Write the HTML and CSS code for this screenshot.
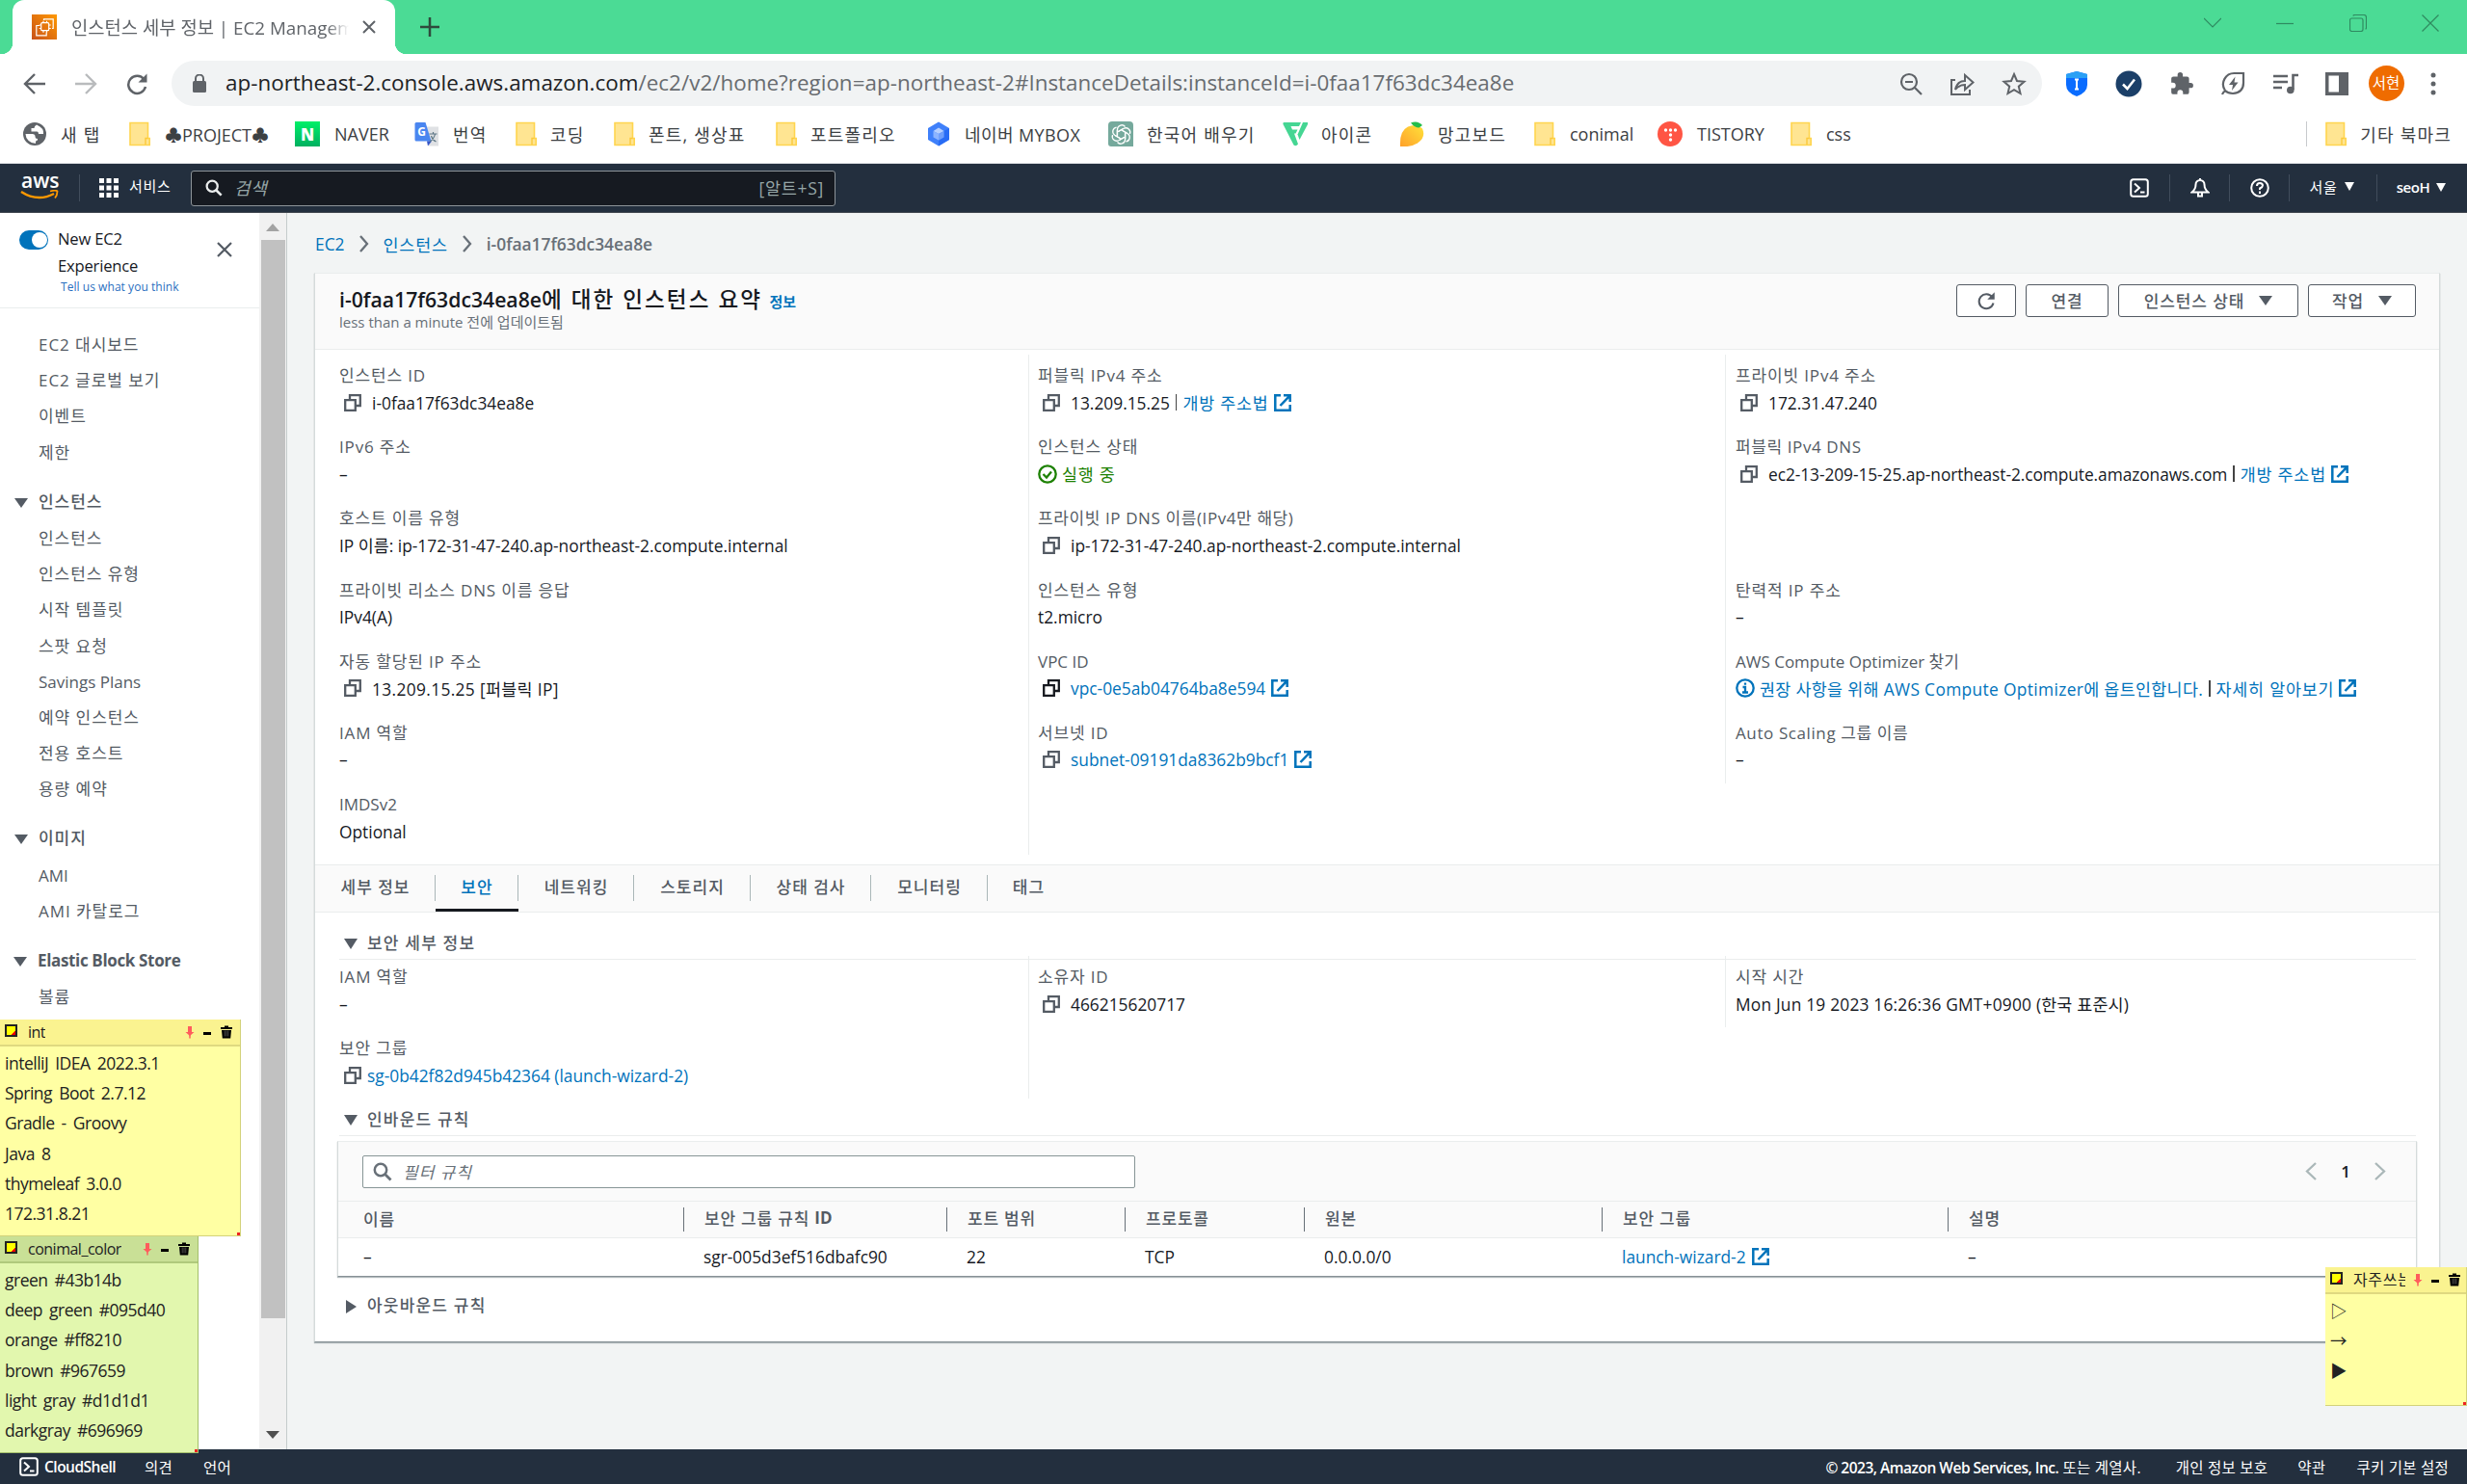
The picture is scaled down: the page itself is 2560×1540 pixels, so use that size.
FILE: index.html
```html
<!DOCTYPE html>
<html lang="ko">
<head>
    <meta charset="UTF-8">
    <meta name="viewport" content="width=device-width, initial-scale=1.0">
    <title>인스턴스 세부 정보 | EC2 Management Console</title>
    <link rel="stylesheet" href="styles.css">
</head>
<body>
    <!-- shared icons -->
    <svg class="sprite" width="0" height="0">
        <linearGradient id="orange" x1="0" y1="1" x2="1" y2="0"><stop offset="0" stop-color="#c8511b"/><stop offset="1" stop-color="#f90"/></linearGradient>
        <linearGradient id="green" x1="0" y1="0" x2="0" y2="1"><stop offset="0" stop-color="#00f068"/><stop offset="1" stop-color="#00b060"/></linearGradient>
        <linearGradient id="mango" x1="0" y1="1" x2="1" y2="0"><stop offset="0" stop-color="#ffa02a"/><stop offset="1" stop-color="#ffe23a"/></linearGradient>
        <symbol id="copy" viewBox="0 0 18 18"><path d="M1.2 6.2h10.6v10.6H1.2zM6 6V1.2h10.8V12H12" fill="none" stroke="currentColor" stroke-width="2.3"/></symbol>
        <symbol id="ext" viewBox="0 0 18 18"><path d="M7 1.3H1.3v15.4h15.4V11M10 1.3h6.7V8M16.2 1.8L6.5 12" fill="none" stroke="currentColor" stroke-width="2.5"/></symbol>
        <symbol id="search" viewBox="0 0 20 20"><circle cx="8" cy="8" r="6.2" fill="none" stroke="currentColor" stroke-width="2.5"/><path d="M12.5 12.5l6 6" stroke="currentColor" stroke-width="2.8"/></symbol>
        <symbol id="folder" viewBox="0 0 22 26"><path d="M1 1.5h18.500v16H21.200v7H1z" fill="#ffe592" stroke="#ffd54f" stroke-width="1.6"/><path d="M17 24v-6.500h2.500" fill="none" stroke="#fbc93c" stroke-width="1.4"/></symbol>
        <symbol id="shell" viewBox="0 0 20 20"><rect x="1.2" y="1.2" width="17.6" height="17.6" rx="2.5" fill="none" stroke="currentColor" stroke-width="2"/><path d="M5 5.500l5 4.500-5 4.500M11 14.500h4.500" fill="none" stroke="currentColor" stroke-width="2"/></symbol>
        <symbol id="reload" viewBox="0 0 24 24"><path d="M19.500 7.500A9 9 0 1 0 21 15" fill="none" stroke="currentColor" stroke-width="2.5"/><path d="M22.500 1.500v9h-9z" fill="currentColor"/></symbol>
        <symbol id="pin" viewBox="0 0 10 14"><path d="M3 1h4v6h2.500L5 11 .5 7H3z" fill="#ff5c5c"/><path d="M5 10v3.500" stroke="#ff5c5c" stroke-width="1.5"/></symbol>
        <symbol id="trash" viewBox="0 0 12 14"><path d="M0 2h4V.5h4V2h4v2H0zM1 5h10l-.8 8.500H1.800z" fill="#000"/><path d="M4.200 5.500v6M6 5.500v6M7.800 5.500v6" stroke="#999" stroke-width=".5"/></symbol>
    </svg>

    <!-- browser chrome -->
    <div class="tabstrip">
        <div class="tab">
            <svg width="26" height="26" viewBox="0 0 26 26"><rect width="26" height="26" fill="url(#orange)"/><g fill="none" stroke="#fff" stroke-width="1.2"><path d="M12.500 6V4.800h9.700v9.700H21M8 11.500H4.800v10.300h10.400V18.500"/><rect x="9.700" y="8.700" width="8" height="8" rx="1"/><path d="M12 6.700v2m3.500-2v2m-3.500 8v2m3.500-2v2M7.700 11h2m-2 3.500h2m8-3.500h2m-2 3.500h2"/></g></svg>
            <span class="tab-title">인스턴스 세부 정보 | EC2 Management</span>
            <svg width="14" height="14" viewBox="0 0 14 14"><path d="M1 1l12 12M13 1L1 13" stroke="#5f6368" stroke-width="2"/></svg>
        </div>
        <svg class="newtab" width="20" height="20" viewBox="0 0 20 20"><path d="M10 0v20M0 10h20" stroke="#2f4a3d" stroke-width="2.5"/></svg>
        <div class="winctl">
            <svg width="18" height="18" viewBox="0 0 18 18"><path d="M0 4l9 9 9-9"/></svg>
            <svg width="18" height="18" viewBox="0 0 18 18"><path d="M0 9.500h18"/></svg>
            <svg width="18" height="18" viewBox="0 0 18 18"><rect x=".5" y="4" width="13.5" height="13.5" rx="2"/><path d="M4 1.500Q4 .5 5.500.5H15q2.500 0 2.500 2.500v10.500q0 1.500-1 1.500"/></svg>
            <svg width="18" height="18" viewBox="0 0 18 18"><path d="M.5.5l17 17M17.500.5l-17 17"/></svg>
        </div>
    </div>

    <div class="toolbar">
        <div class="nav">
            <svg width="24" height="24" viewBox="0 0 24 24" fill="none" stroke="#5f6368" stroke-width="2.4"><path d="M23 12H3M12 2L2 12l10 10"/></svg>
            <svg width="24" height="24" viewBox="0 0 24 24" fill="none" stroke="#b9bbbd" stroke-width="2.4"><path d="M1 12h20M12 2l10 10-10 10"/></svg>
            <svg class="grey" width="24" height="24"><use href="#reload"/></svg>
        </div>
        <div class="urlbar">
            <svg width="14" height="20" viewBox="0 0 14 20"><rect y="7" width="14" height="12" rx="1.5" fill="#5f6368"/><path d="M3 8V4.500a4 4 0 0 1 8 0V8" fill="none" stroke="#5f6368" stroke-width="2"/></svg>
            <span class="url"><b>ap-northeast-2.console.aws.amazon.com</b>/ec2/v2/home?region=ap-northeast-2#InstanceDetails:instanceId=i-0faa17f63dc34ea8e</span>
            <div class="url-icons">
                <svg width="24" height="24" viewBox="0 0 24 24" fill="none" stroke="#5f6368" stroke-width="2.2"><circle cx="10" cy="10" r="8"/><path d="M16 16l7 7M6 10h8"/></svg>
                <svg width="26" height="24" viewBox="0 0 26 24" fill="none" stroke="#5f6368" stroke-width="2"><path d="M6 8H2v15h19v-5"/><path d="M6 18q2-9 10-9V3l8.500 7.500L16 18v-5q-6 0-10 5z"/></svg>
                <svg width="26" height="26" viewBox="0 0 26 26" fill="none" stroke="#5f6368" stroke-width="2"><path d="M13 3l3 7 7.500.700-5.700 5 1.700 7.300-6.500-3.900L6.500 23l1.700-7.300-5.700-5L10 10z"/></svg>
            </div>
        </div>
        <div class="exts">
            <svg width="26" height="28" viewBox="0 0 26 28"><path d="M13 1l11 3v11q0 8-11 12Q2 23 2 15V4z" fill="#0a6cff"/><path d="M13 1l11 3v4H2V4z" fill="#2aa0f5"/><path d="M13 9v11M11 9.500h4M11 19.500h4" stroke="#fff" stroke-width="2"/></svg>
            <svg width="28" height="28" viewBox="0 0 28 28"><circle cx="14" cy="14" r="13.5" fill="#1b3f68"/><path d="M8 14.500l4.500 4.500L20 9.500" fill="none" stroke="#fff" stroke-width="2.5"/></svg>
            <svg width="26" height="26" viewBox="0 0 24 24"><path d="M20.500 11H19V7a2 2 0 0 0-2-2h-4V3.500a2.500 2.500 0 0 0-5 0V5H4a2 2 0 0 0-2 2v3.800h1.500a2.700 2.700 0 0 1 0 5.400H2V20a2 2 0 0 0 2 2h3.800v-1.500a2.700 2.700 0 0 1 5.400 0V22H17a2 2 0 0 0 2-2v-4h1.500a2.500 2.500 0 0 0 0-5z" fill="#5f6368"/></svg>
            <svg width="26" height="26" viewBox="0 0 26 26" fill="none" stroke="#5f6368" stroke-width="2.2"><path d="M24 2h-9A11.500 11.500 0 0 0 5 20q3 3 8 3 11-1 11-11zM2 24q1-3 4-4"/><path d="M15.500 5.500L9 14h4l-1 6 6.500-8.500h-4z" fill="#5f6368" stroke="none"/></svg>
            <svg width="28" height="24" viewBox="0 0 28 24"><path d="M1 4h15M1 10h15M1 16h9" stroke="#5f6368" stroke-width="2.6"/><path d="M21.500 18V3H27" fill="none" stroke="#5f6368" stroke-width="2.6"/><circle cx="18.8" cy="18.5" r="3.8" fill="#5f6368"/></svg>
            <svg width="24" height="24" viewBox="0 0 24 24"><path d="M0 0h24v24H0zM3.500 3.500v17H14v-17z" fill="#5f6368" fill-rule="evenodd"/></svg>
            <span class="avatar">서현</span>
            <svg width="6" height="24" viewBox="0 0 6 24" fill="#5f6368"><circle cx="3" cy="3" r="2.5"/><circle cx="3" cy="12" r="2.5"/><circle cx="3" cy="21" r="2.5"/></svg>
        </div>
    </div>

    <div class="bookmarks">
        <a class="ko"><svg width="26" height="26" viewBox="0 0 26 26"><circle cx="13" cy="13" r="12" fill="#5f6368"/><path d="M3.500 13h7q3 0 3 2.500t2.500 2.500v1.500q-2 0-2 2v1.300A10 10 0 0 1 3.500 13z" fill="#fff"/><path d="M15 3.500q-2.500 1-2.500 3.500H9.500v3.500h6q1.500 0 1.500 2.500h5q1-6-7-9.500z" fill="#fff"/></svg>새 탭</a>
        <a><svg width="22" height="26"><use href="#folder"/></svg>♣PROJECT♣</a>
        <a><svg width="26" height="26" viewBox="0 0 26 26"><rect width="26" height="26" fill="url(#green)"/><text class="glyph" x="13" y="19.5" font-size="17" font-weight="800">N</text></svg>NAVER</a>
        <a class="ko"><svg width="26" height="26" viewBox="0 0 26 26"><path d="M9 5.500h16v20H15z" fill="#dfe1e4"/><path d="M2 1h9.500l6 19.500H2q-1.500 0-1.500-1.500V2.500Q.5 1 2 1z" fill="#4a86f0"/><path d="M13 20.500h5l-4 5z" fill="#3355c8"/><text class="glyph" x="7.5" y="15" font-size="12" font-weight="700">G</text><path d="M15.500 13h8M19.500 11v2M21.500 13q-1 5-5.500 8M17.500 15q1 4 5 6" fill="none" stroke="#5d7684" stroke-width="1.2"/></svg>번역</a>
        <a class="ko"><svg width="22" height="26"><use href="#folder"/></svg>코딩</a>
        <a class="ko"><svg width="22" height="26"><use href="#folder"/></svg>폰트, 생상표</a>
        <a class="ko"><svg width="22" height="26"><use href="#folder"/></svg>포트폴리오</a>
        <a class="mybox"><svg width="26" height="26" viewBox="0 0 26 26"><path d="M13 .5l11 6.500v12L13 25.500 2 19V7z" fill="#3f80fa"/><path d="M13 20v5.500l11-6.500V7l-5.500 3v6.500z" fill="#286cf5"/><path d="M13 6.500l5.500 3.500-5.500 3-5.500-3z" fill="#b5cfff"/><path d="M7.500 10l5.500 3v6.500l-5.500-3z" fill="#8cb4ff"/><path d="M13 13l5.500-3v6.500L13 19.500z" fill="#6f9ffb"/></svg>네이버 MYBOX</a>
        <a class="ko"><svg width="26" height="26" viewBox="0 0 26 26"><path d="M4 0h18q4 0 4 4v22H3q-3 0-3-3V4q0-4 4-4z" fill="#75a99c"/><g fill="none" stroke="#fff" stroke-width="1.3"><path id="petal" d="M9.500 14.500V8a4.500 4.500 0 0 1 8-2.500M9.500 11l6-3.500"/><use href="#petal" transform="rotate(60 13.5 13.5)"/><use href="#petal" transform="rotate(120 13.5 13.5)"/><use href="#petal" transform="rotate(180 13.5 13.5)"/><use href="#petal" transform="rotate(240 13.5 13.5)"/><use href="#petal" transform="rotate(300 13.5 13.5)"/></g></svg>한국어 배우기</a>
        <a class="ko"><svg width="26" height="26" viewBox="0 0 26 26" fill="#45d693"><path d="M1.500 1H19l-2 4H8.500l1.500 3.500h5.500l-2 4H12l4 11q-2 3-4.500 1L.5 3Q0 1 1.500 1z"/><path d="M21 1h5v2l-8.500 16-2-5.500z"/></svg>아이콘</a>
        <a class="ko"><svg width="26" height="26" viewBox="0 0 26 26"><path d="M1 26Q0 10 9 5.500q9-4 15 2 4 9-5 15-7 4.500-18 3.500z" fill="url(#mango)"/><path d="M12 1.500q7-3 12 2.500l-3.500 2.500q-4.500 0-8.500-5z" fill="#24bd4b"/></svg>망고보드</a>
        <a><svg width="22" height="26"><use href="#folder"/></svg>conimal</a>
        <a><svg width="26" height="26" viewBox="0 0 26 26"><circle cx="13" cy="13" r="13" fill="#ff5544"/><g fill="#fff"><circle cx="8.5" cy="9" r="1.7"/><circle cx="13.5" cy="9" r="1.7"/><circle cx="18.5" cy="9" r="1.7"/><circle cx="13.5" cy="14" r="1.7"/><circle cx="13.5" cy="19" r="1.7"/></g></svg>TISTORY</a>
        <a><svg width="22" height="26"><use href="#folder"/></svg>css</a>
        <a class="other ko"><svg width="22" height="26"><use href="#folder"/></svg>기타 북마크</a>
    </div>

    <!-- aws header -->
    <div class="awsbar">
        <div class="logo">
            <span>aws</span>
            <svg width="40" height="12" viewBox="0 0 40 12"><path d="M1 2q17 11 34 2" fill="none" stroke="#f90" stroke-width="2.5"/><path d="M31 1.500q6-1.500 7.500 0 0 4-2.500 7" fill="none" stroke="#f90" stroke-width="1.8"/></svg>
        </div>
        <div class="services">
            <svg width="20" height="20" viewBox="0 0 20 20" fill="#fff"><path d="M0 0h5v5H0zM7.500 0h5v5h-5zM15 0h5v5h-5zM0 7.500h5v5H0zM7.500 7.500h5v5h-5zM15 7.500h5v5h-5zM0 15h5v5H0zM7.500 15h5v5h-5zM15 15h5v5h-5z"/></svg>
            <span>서비스</span>
        </div>
        <div class="awssearch">
            <svg width="18" height="18"><use href="#search"/></svg>
            <i>검색</i>
            <span>[알트+S]</span>
        </div>
        <div class="awsright">
            <div><svg width="20" height="20"><use href="#shell"/></svg></div>
            <div><svg width="20" height="20" viewBox="0 0 20 20" fill="none" stroke="#fff" stroke-width="2"><path d="M1.500 14.500q4-3 4-8a4.500 4.500 0 0 1 9 0q0 5 4 8z"/><path d="M8 15v3.500h4V15M10 0v2"/></svg></div>
            <div><svg width="20" height="20" viewBox="0 0 20 20" fill="none" stroke="#fff" stroke-width="2"><circle cx="10" cy="10" r="8.8"/><path d="M7 8q0-3 3-3t3 2.500q0 1.500-3 3V12M10 13.500V16"/></svg></div>
            <div class="region">서울<em class="caret"></em></div>
            <div class="user">seoH<em class="caret"></em></div>
        </div>
    </div>

    <div class="body">
        <div class="sidebar">
            <div class="newexp">
                <span class="toggle"></span>
                <div class="newexp-text">New EC2<br>Experience<small>Tell us what you think</small></div>
                <svg width="16" height="16" viewBox="0 0 16 16"><path d="M1 1l14 14M15 1L1 15" stroke="#545b64" stroke-width="2.2"/></svg>
            </div>
            <ul class="menu">
                <li>EC2 대시보드</li>
                <li>EC2 글로벌 보기</li>
                <li>이벤트</li>
                <li>제한</li>
                <li class="head">인스턴스</li>
                <li>인스턴스</li>
                <li>인스턴스 유형</li>
                <li>시작 템플릿</li>
                <li>스팟 요청</li>
                <li class="en">Savings Plans</li>
                <li>예약 인스턴스</li>
                <li>전용 호스트</li>
                <li>용량 예약</li>
                <li class="head">이미지</li>
                <li class="en">AMI</li>
                <li>AMI 카탈로그</li>
                <li class="head en">Elastic Block Store</li>
                <li>볼륨</li>
            </ul>
        </div>
        <div class="scrollbar">
            <em class="up"></em>
            <div class="thumb"></div>
            <em class="down"></em>
        </div>

        <div class="main">
            <div class="crumbs">
                <a>EC2</a>
                <svg width="12" height="18" viewBox="0 0 12 18"><path d="M2 1l7 8-7 8"/></svg>
                <a class="ko">인스턴스</a>
                <svg width="12" height="18" viewBox="0 0 12 18"><path d="M2 1l7 8-7 8"/></svg>
                <b>i-0faa17f63dc34ea8e</b>
            </div>

            <div class="panel">
                <div class="panel-head">
                    <div>
                        <h1>i-0faa17f63dc34ea8e<span>에 대한 인스턴스 요약</span> <a>정보</a></h1>
                        <p>less than a minute 전에 업데이트됨</p>
                    </div>
                    <div class="buttons">
                        <span class="btn b1"><svg width="20" height="20"><use href="#reload"/></svg></span>
                        <span class="btn b2">연결</span>
                        <span class="btn b3">인스턴스 상태<em class="caret"></em></span>
                        <span class="btn b4">작업<em class="caret"></em></span>
                    </div>
                </div>

                <div class="details">
                    <div class="col">
                        <div class="kv"><label>인스턴스 ID</label><p><svg class="copy"><use href="#copy"/></svg>i-0faa17f63dc34ea8e</p></div>
                        <div class="kv"><label>IPv6 주소</label><p>–</p></div>
                        <div class="kv"><label>호스트 이름 유형</label><p>IP 이름: ip-172-31-47-240.ap-northeast-2.compute.internal</p></div>
                        <div class="kv"><label>프라이빗 리소스 DNS 이름 응답</label><p>IPv4(A)</p></div>
                        <div class="kv"><label>자동 할당된 IP 주소</label><p class="mix"><svg class="copy"><use href="#copy"/></svg>13.209.15.25 [퍼블릭 IP]</p></div>
                        <div class="kv"><label>IAM 역할</label><p>–</p></div>
                        <div class="kv"><label class="en">IMDSv2</label><p>Optional</p></div>
                    </div>
                    <div class="col">
                        <div class="kv"><label>퍼블릭 IPv4 주소</label><p><svg class="copy"><use href="#copy"/></svg>13.209.15.25<s></s><a class="ko">개방 주소법</a><svg class="ext"><use href="#ext"/></svg></p></div>
                        <div class="kv"><label>인스턴스 상태</label><p class="ok ko"><svg class="state" viewBox="0 0 20 20" fill="none" stroke="currentColor" stroke-width="2.3"><circle cx="10" cy="10" r="8.7"/><path d="M5.500 10l3.500 3.500 5-6"/></svg>실행 중</p></div>
                        <div class="kv"><label class="mix">프라이빗 IP DNS 이름(IPv4만 해당)</label><p><svg class="copy"><use href="#copy"/></svg>ip-172-31-47-240.ap-northeast-2.compute.internal</p></div>
                        <div class="kv"><label>인스턴스 유형</label><p>t2.micro</p></div>
                        <div class="kv"><label class="en">VPC ID</label><p><svg class="copy dark"><use href="#copy"/></svg><a>vpc-0e5ab04764ba8e594</a><svg class="ext"><use href="#ext"/></svg></p></div>
                        <div class="kv"><label>서브넷 ID</label><p><svg class="copy"><use href="#copy"/></svg><a>subnet-09191da8362b9bcf1</a><svg class="ext"><use href="#ext"/></svg></p></div>
                    </div>
                    <div class="col short">
                        <div class="kv"><label>프라이빗 IPv4 주소</label><p><svg class="copy"><use href="#copy"/></svg>172.31.47.240</p></div>
                        <div class="kv"><label class="mix">퍼블릭 IPv4 DNS</label><p><svg class="copy"><use href="#copy"/></svg><span class="dns">ec2-13-209-15-25.ap-northeast-2.compute.amazonaws.com</span><s></s><a class="ko">개방 주소법</a><svg class="ext"><use href="#ext"/></svg></p></div>
                        <div class="kv"></div>
                        <div class="kv"><label>탄력적 IP 주소</label><p>–</p></div>
                        <div class="kv"><label class="en">AWS Compute Optimizer 찾기</label><p><svg class="info" viewBox="0 0 20 20" fill="none" stroke="currentColor" stroke-width="2.3"><circle cx="10" cy="10" r="8.7"/><path d="M10 4.500v2.300M7.500 9H10v5M7 14.500h6"/></svg><a class="mix">권장 사항을 위해 AWS Compute Optimizer에 옵트인합니다.</a><s></s><a class="ko">자세히 알아보기</a><svg class="ext"><use href="#ext"/></svg></p></div>
                        <div class="kv"><label class="mix">Auto Scaling 그룹 이름</label><p>–</p></div>
                    </div>
                </div>

                <div class="tabs">
                    <span>세부 정보</span>
                    <span class="active">보안</span>
                    <span>네트워킹</span>
                    <span>스토리지</span>
                    <span>상태 검사</span>
                    <span>모니터링</span>
                    <span>태그</span>
                </div>

                <h2 class="sec">보안 세부 정보</h2>
                <div class="details security">
                    <div class="col">
                        <div class="kv"><label>IAM 역할</label><p>–</p></div>
                        <div class="kv"><label>보안 그룹</label><p><svg class="copy tight"><use href="#copy"/></svg><a>sg-0b42f82d945b42364 (launch-wizard-2)</a></p></div>
                    </div>
                    <div class="col">
                        <div class="kv"><label>소유자 ID</label><p><svg class="copy"><use href="#copy"/></svg>466215620717</p></div>
                    </div>
                    <div class="col short">
                        <div class="kv"><label>시작 시간</label><p class="date">Mon Jun 19 2023 16:26:36 GMT+0900 (한국 표준시)</p></div>
                    </div>
                </div>

                <h2 class="sec inbound">인바운드 규칙</h2>
                <div class="rules">
                    <div class="rules-top">
                        <div class="filter"><svg width="20" height="20"><use href="#search"/></svg><i>필터 규칙</i></div>
                        <div class="pager">
                            <svg width="12" height="19" viewBox="0 0 12 19"><path d="M11 1L2 9.500l9 8.500"/></svg>
                            <span>1</span>
                            <svg width="12" height="19" viewBox="0 0 12 19"><path d="M1 1l9 8.500L1 18"/></svg>
                        </div>
                    </div>
                    <div class="row th">
                        <span>이름</span><span>보안 그룹 규칙&nbsp;<b>ID</b></span><span>포트 범위</span><span>프로토콜</span><span>원본</span><span>보안 그룹</span><span>설명</span>
                    </div>
                    <div class="row">
                        <span>–</span><span>sgr-005d3ef516dbafc90</span><span>22</span><span>TCP</span><span>0.0.0.0/0</span><span><a>launch-wizard-2</a><svg class="ext"><use href="#ext"/></svg></span><span>–</span>
                    </div>
                </div>
                <h2 class="sec closed">아웃바운드 규칙</h2>
            </div>
        </div>
    </div>

    <div class="footer">
        <svg width="20" height="20"><use href="#shell"/></svg>
        <b class="cs">CloudShell</b>
        <span class="f-opinion">의견</span>
        <span>언어</span>
        <span class="copyright"><b>© 2023, Amazon Web Services, Inc.</b> 또는 계열사.</span>
        <span class="f-privacy">개인 정보 보호</span>
        <span class="f-terms">약관</span>
        <span>쿠키 기본 설정</span>
    </div>

    <!-- sticky notes on the desktop -->
    <div class="note n1">
        <div class="note-head"><em></em><span>int</span><svg width="10" height="14"><use href="#pin"/></svg><u></u><svg width="12" height="14"><use href="#trash"/></svg></div>
        <p>intelliJ IDEA 2022.3.1</p>
        <p>Spring Boot 2.7.12</p>
        <p>Gradle - Groovy</p>
        <p>Java 8</p>
        <p>thymeleaf 3.0.0</p>
        <p>172.31.8.21</p>
    </div>
    <div class="note n2">
        <div class="note-head"><em></em><span>conimal_color</span><svg width="10" height="14"><use href="#pin"/></svg><u></u><svg width="12" height="14"><use href="#trash"/></svg></div>
        <p>green #43b14b</p>
        <p>deep green #095d40</p>
        <p>orange #ff8210</p>
        <p>brown #967659</p>
        <p>light gray #d1d1d1</p>
        <p>darkgray #696969</p>
    </div>
    <div class="note n3">
        <div class="note-head"><em></em><span>자주쓰는</span><svg width="10" height="14"><use href="#pin"/></svg><u></u><svg width="12" height="14"><use href="#trash"/></svg></div>
        <p>▷</p>
        <p>→</p>
        <p>▶</p>
    </div>
</body>
</html>
```

FILE: styles.css
```css
* {
    box-sizing: border-box;
}
body {
    margin: 0;
    width: 2560px;
    height: 1540px;
    overflow: hidden;
    position: relative;
    display: flex;
    flex-direction: column;
    font-family: "Open Sans", "Noto Sans CJK KR", sans-serif;
    font-size: 17px;
    color: #16191f;
    background: #fff;
    white-space: nowrap;
}
svg {
    flex: none;
    display: block;
}
.sprite {
    position: absolute;
}
.glyph {
    fill: #fff;
    text-anchor: middle;
    letter-spacing: 0;
}
p, h1, h2, ul {
    margin: 0;
    padding: 0;
}
a {
    color: #0073bb;
}
.ko {
    letter-spacing: 0.8px;
}
.mix {
    letter-spacing: 0.35px;
}

/* browser */
.tabstrip {
    height: 56px;
    background: #4bdb95;
    display: flex;
    align-items: center;
}
.tab {
    position: relative;
    margin-left: 13px;
    width: 397px;
    height: 56px;
    background: #fff;
    border-radius: 12px 12px 0 0;
    display: flex;
    align-items: center;
    padding-left: 20px;
}
.tab::before, .tab::after {
    content: "";
    position: absolute;
    bottom: 0;
    width: 12px;
    height: 12px;
}
.tab::before {
    left: -12px;
    background: radial-gradient(circle at 0 0, #4bdb95 12px, #fff 12.5px);
}
.tab::after {
    right: -12px;
    background: radial-gradient(circle at 100% 0, #4bdb95 12px, #fff 12.5px);
}
.tab-title {
    margin: 0 14px 0 15px;
    width: 288px;
    overflow: hidden;
    font-size: 18.8px;
    color: #5f6368;
    -webkit-mask-image: linear-gradient(90deg, #000 92%, transparent);
    mask-image: linear-gradient(90deg, #000 92%, transparent);
}
.newtab {
    margin-left: 26px;
}
.winctl {
    margin-left: auto;
    margin-right: 29px;
    display: flex;
    gap: 57.5px;
    padding-bottom: 9px;
}
.winctl path, .winctl rect {
    fill: none;
    stroke: #2f8a60;
    stroke-width: 1.2;
}
.toolbar {
    height: 61px;
    display: flex;
    align-items: center;
    padding-left: 24px;
}
.nav {
    display: flex;
    gap: 29px;
    width: 154px;
}
.grey {
    color: #5f6368;
}
.urlbar {
    width: 1941px;
    height: 47px;
    border-radius: 24px;
    background: #f1f3f4;
    display: flex;
    align-items: center;
    padding: 0 16px 0 22px;
}
.url {
    margin-left: 20px;
    font-size: 22.4px;
    letter-spacing: 0.025px;
    color: #686c70;
    padding-bottom: 2px;
}
.url b {
    font-weight: 400;
    color: #202124;
}
.url-icons {
    margin-left: auto;
    display: flex;
    align-items: center;
    gap: 28px;
}
.exts {
    flex: 1;
    display: flex;
    align-items: center;
    justify-content: space-between;
    padding: 0 32px 0 23px;
}
.avatar {
    width: 37px;
    height: 37px;
    margin: 0 0 0 -7px;
    line-height: 36px;
    border-radius: 50%;
    background: #ef6c00;
    color: #fff;
    font-size: 15.5px;
    text-align: center;
}
.bookmarks {
    height: 53px;
    padding: 0 16px 8px 23px;
    border-bottom: 1px solid #dadce0;
    display: grid;
    grid-template-columns: 111px 172px 124px 105px 102px 168px 156px 189px 181px 121px 140px 128px 138px 1fr auto;
    align-items: center;
    font-size: 18px;
}
.bookmarks a {
    display: flex;
    align-items: center;
    gap: 15px;
    color: #3c4043;
}
.bookmarks .mybox {
    letter-spacing: 0.4px;
    gap: 14px;
}
.bookmarks .ko {
    letter-spacing: 1.2px;
    gap: 14px;
}
.bookmarks .other {
    border-left: 1px solid #c8cacd;
    padding-left: 19px;
    height: 26px;
}

/* aws header */
.awsbar {
    height: 51px;
    background: #232f3e;
    border-bottom: 1px solid #414750;
    color: #fff;
    display: flex;
    align-items: center;
    font-size: 15px;
}
.logo {
    width: 83px;
    height: 28px;
    padding-left: 21px;
    border-right: 1px solid #414d5c;
}
.logo span {
    display: block;
    font-size: 21px;
    line-height: 12px;
    padding-left: 1px;
    font-weight: 600;
}
.logo svg {
    margin-top: 4px;
}
.services {
    width: 115px;
    padding-left: 20px;
    display: flex;
    align-items: center;
    gap: 11px;
    letter-spacing: 0.7px;
}
.services span {
    padding-bottom: 5px;
}
.awssearch {
    width: 669px;
    height: 37px;
    background: #161a21;
    border: 1px solid #8d9499;
    border-radius: 3px;
    display: flex;
    align-items: center;
    padding: 0 11px 0 14px;
    font-size: 18px;
    color: #95a5a6;
}
.awssearch svg {
    color: #eaeded;
}
.awssearch i {
    margin-left: 12px;
    padding-bottom: 3px;
    letter-spacing: 0.8px;
}
.awssearch span {
    margin-left: auto;
    font-size: 17.5px;
    letter-spacing: 0.7px;
    padding-bottom: 1px;
}
.awsright {
    margin-left: auto;
    display: flex;
    align-items: center;
}
.awsright div {
    width: 62px;
    height: 28px;
    display: flex;
    align-items: center;
    justify-content: center;
    border-left: 1px solid #414d5c;
}
.awsright div:first-child {
    border: 0;
}
.awsright .region {
    width: 91px;
    padding: 0 3px 3px 0;
    letter-spacing: 0.7px;
}
.awsright .user {
    width: 94px;
    font-weight: 600;
    letter-spacing: -0.5px;
    padding: 0 2px 2px 0;
}
.caret {
    display: inline-block;
    border: 5px solid transparent;
    border-top: 9px solid currentColor;
    border-bottom: 0;
    margin-left: 7px;
}

/* sidebar */
.body {
    flex: 1;
    display: flex;
    min-height: 0;
}
.sidebar {
    width: 269px;
    overflow: hidden;
    color: #545b64;
}
.newexp {
    height: 99px;
    border-bottom: 1px solid #eaeded;
    display: flex;
    padding: 13px 0 0 20px;
}
.toggle {
    flex: none;
    width: 30px;
    height: 20px;
    margin-top: 5px;
    border-radius: 10px;
    background: #0073bb;
    position: relative;
}
.toggle::after {
    content: "";
    position: absolute;
    right: 1px;
    top: 2px;
    width: 16px;
    height: 16px;
    border-radius: 50%;
    background: #fff;
}
.newexp-text {
    flex: none;
    width: 175px;
    padding-left: 10px;
    line-height: 28px;
    font-size: 16.6px;
    letter-spacing: -0.2px;
    color: #16191f;
}
.newexp-text small {
    display: block;
    font-size: 12px;
    line-height: 15px;
    padding-left: 3px;
    letter-spacing: 0.05px;
    color: #2a6fc0;
}
.newexp > svg {
    margin-top: 17px;
}
.menu {
    list-style: none;
    padding: 19px 0 0 40px;
}
.menu li {
    height: 37.2px;
    line-height: 37px;
    letter-spacing: 0.95px;
}
.menu .en {
    letter-spacing: 0;
}
.menu .head {
    position: relative;
    margin-top: 15px;
    line-height: 36px;
    font-weight: 500;
}
.menu .head.en {
    font-weight: 700;
    letter-spacing: -0.35px;
    line-height: 35px;
    left: -1px;
}
.menu .head::before {
    content: "";
    position: absolute;
    left: -25px;
    top: 14px;
    border: 7px solid transparent;
    border-top: 10px solid #545b64;
    border-bottom: 0;
}
.scrollbar {
    width: 29px;
    background: #f1f1f1;
    border-right: 1px solid #c5cccc;
    display: flex;
    flex-direction: column;
    align-items: center;
}
.scrollbar em {
    border: 7px solid transparent;
}
.scrollbar .up {
    border-bottom: 8px solid #a3a3a3;
    border-top: 0;
    margin: 11px 0 9px;
}
.scrollbar .down {
    border-top: 8px solid #505050;
    border-bottom: 0;
    margin: auto 0 11px;
}
.thumb {
    width: 25px;
    height: 1119px;
    background: #c1c1c1;
}

/* main */
.main {
    flex: 1;
    background: #f2f4f4;
    padding: 0 28px;
}
.crumbs {
    height: 62px;
    display: flex;
    align-items: center;
    gap: 17px;
    padding: 2px 0 0 1px;
    font-size: 17.4px;
    color: #687078;
}
.crumbs svg {
    fill: none;
    stroke: #687078;
    stroke-width: 2.3;
    margin: 0 -3px;
}
.crumbs b {
    font-weight: 600;
}
.panel {
    height: 1110px;
    background: #fff;
    border: 1px solid #d5dbdb;
    border-top-color: #eaeded;
    border-bottom-color: #879196;
    box-shadow: 0 1px 1px rgba(0,28,36,0.3);
}
.panel-head {
    height: 79px;
    background: #fafafa;
    border-bottom: 1px solid #eaeded;
    display: flex;
    justify-content: space-between;
    padding: 11px 24px 0 25px;
}
.panel-head h1 {
    font-size: 21.2px;
    line-height: 32px;
    height: 31px;
    font-weight: 600;
}
.panel-head h1 span {
    font-size: 22.5px;
    letter-spacing: 2.1px;
    font-weight: 500;
}
.panel-head h1 a {
    font-size: 15px;
    margin-left: 2px;
}
.panel-head p {
    font-size: 15px;
    line-height: 17px;
    color: #687078;
}
.buttons {
    display: flex;
    gap: 10px;
}
.btn {
    height: 34px;
    border: 1px solid #545b64;
    border-radius: 3px;
    background: #fff;
    color: #545b64;
    font-weight: 500;
    letter-spacing: 0.9px;
    display: flex;
    align-items: center;
    justify-content: center;
    padding-bottom: 1px;
}
.btn .caret {
    border-width: 10px 7px 0;
    margin-left: 15px;
}
.b1 {
    width: 62px;
}
.b2 {
    width: 86px;
}
.b3 {
    width: 187px;
}
.b4 {
    width: 112px;
}
.details {
    display: grid;
    grid-template-columns: 715px 723px 1fr;
    height: 534px;
    padding: 5px 0 10px 25px;
}
.col + .col {
    border-left: 1px solid #eaeded;
    padding-left: 9px;
}
.col.short {
    align-self: start;
    padding-left: 10px;
}
.kv {
    height: 74.2px;
    padding-top: 9px;
}
.kv label {
    display: block;
    line-height: 26px;
    height: 27px;
    color: #545b64;
    letter-spacing: 0.85px;
}
.kv label.mix {
    letter-spacing: 0.6px;
}
.kv label.en {
    letter-spacing: 0;
}
.kv p {
    display: flex;
    align-items: center;
    height: 27px;
    font-size: 17.35px;
}
.kv s {
    width: 1.5px;
    height: 17px;
    background: #444;
    margin: 0 6px;
}
.dns {
    letter-spacing: -0.08px;
}
.copy {
    width: 18px;
    height: 18px;
    color: #545b64;
    margin: 0 11px 0 5px;
}
.copy.tight {
    margin-right: 6px;
}
.copy.dark {
    color: #16191f;
}
.ext {
    width: 18px;
    height: 18px;
    margin-left: 6px;
    color: #0073bb;
}
.ko + .ext {
    margin-left: 5px;
}
.state, .info {
    width: 20px;
    height: 20px;
    margin-right: 5px;
}
.ok {
    color: #1d8102;
}
.info {
    color: #0073bb;
}
.date {
    letter-spacing: 0.2px;
}
.tabs {
    height: 50px;
    background: #fafafa;
    border-top: 1px solid #eaeded;
    border-bottom: 1px solid #eaeded;
    display: grid;
    grid-template-columns: 125px 86px 120px 121px 125px 121px 85px;
    color: #545b64;
    font-weight: 500;
    letter-spacing: 1px;
    line-height: 45px;
}
.tabs span {
    position: relative;
    text-align: center;
}
.tabs span:not(:last-child)::after {
    content: "";
    position: absolute;
    right: 0;
    top: 10px;
    height: 27px;
    border-right: 1px solid #aab7b8;
}
.tabs .active {
    color: #0073bb;
    box-shadow: inset 0 -3px #16191f;
}
.sec {
    position: relative;
    margin: 16px 24px 0 25px;
    height: 33px;
    line-height: 31px;
    border-bottom: 1px solid #eaeded;
    font-size: 17px;
    font-weight: 500;
    letter-spacing: 1.2px;
    color: #545b64;
    padding-left: 29px;
}
.sec::before {
    content: "";
    position: absolute;
    left: 5px;
    top: 11px;
    border: 7px solid transparent;
    border-top: 11px solid #545b64;
    border-bottom: 0;
}
.security {
    height: 148px;
    padding-top: 0;
    padding-bottom: 0;
    margin-top: -4px;
}
.inbound {
    margin-top: 6px;
}
.closed {
    border: 0;
    margin-top: 14px;
}
.closed::before {
    top: 10px;
    left: 7px;
    border: 7px solid transparent;
    border-left: 11px solid #545b64;
    border-right: 0;
}
.rules {
    margin: 5px 23px 0;
    height: 141px;
    border: 1px solid #d5dbdb;
    border-top-color: #eaeded;
    border-bottom-color: #879196;
    box-shadow: 0 1px 1px rgba(0,28,36,0.3);
}
.rules-top {
    height: 61px;
    background: #fafafa;
    display: flex;
    align-items: center;
    justify-content: space-between;
    padding: 0 31px 0 25px;
}
.filter {
    width: 802px;
    height: 34px;
    border: 1px solid #879596;
    border-radius: 2px;
    background: #fff;
    display: flex;
    align-items: center;
    padding-left: 10px;
    gap: 11px;
    color: #687078;
    letter-spacing: 1px;
}
.pager {
    display: flex;
    align-items: center;
    gap: 25px;
    font-weight: 600;
}
.pager svg {
    fill: none;
    stroke: #aab7b8;
    stroke-width: 2.3;
}
.row {
    height: 39px;
    display: grid;
    grid-template-columns: 358px 273px 185px 186px 309px 359px 1fr;
    align-items: center;
    font-size: 17.35px;
}
.row span {
    padding: 0 0 2px 21px;
    display: flex;
    align-items: center;
}
.row span:first-child {
    padding-left: 26px;
}
.th {
    background: #fafafa;
    border-top: 1px solid #eaeded;
    border-bottom: 1px solid #eaeded;
    color: #545b64;
    font-size: 17px;
    font-weight: 500;
    letter-spacing: 0.8px;
}
.th b {
    letter-spacing: 0;
}
.th span + span {
    height: 25px;
    padding-bottom: 4px;
    border-left: 1px solid #687078;
}

/* footer */
.footer {
    height: 36px;
    background: #232f3e;
    color: #fff;
    display: flex;
    align-items: center;
    padding: 0 19px 0 20px;
    font-size: 15.5px;
    letter-spacing: 0.25px;
}
.footer b {
    font-weight: 600;
    letter-spacing: -0.5px;
}
.cs {
    margin-left: 6px;
    width: 104px;
}
.f-opinion {
    width: 61px;
}
.copyright {
    margin-left: auto;
}
.f-privacy {
    margin: 0 31px 0 36px;
}
.f-terms {
    margin-right: 32px;
}

/* notes */
.note {
    position: absolute;
    left: 0;
    background: #ffffa3;
    border-bottom: 1px solid #d3d27a;
    border-right: 1px solid #d3d27a;
    font-size: 17.5px;
    letter-spacing: -0.5px;
    word-spacing: 3px;
    line-height: 31.2px;
    color: #222;
}
.note::after {
    content: "";
    position: absolute;
    right: 0;
    bottom: 0;
    width: 3px;
    height: 3px;
    background: #e22;
}
.note p {
    padding-left: 5px;
}
.note-head {
    height: 28px;
    margin-bottom: 2px;
    background: #faf390;
    border-bottom: 2px solid #dfd980;
    display: flex;
    align-items: center;
    padding: 0 8px 0 5px;
    font-size: 16px;
    letter-spacing: -0.5px;
    line-height: 26px;
}
.note-head em {
    flex: none;
    width: 13px;
    height: 13px;
    border: 2px solid #222;
    background: linear-gradient(135deg, #ff0 75%, #e00 75%);
    margin-bottom: 3px;
}
.note-head span {
    margin: 0 auto 0 11px;
    overflow: hidden;
}
.note-head u {
    width: 8px;
    height: 3px;
    background: #000;
    margin: 3px 10px 0 9px;
}
.n1 {
    top: 1058px;
    width: 250px;
    height: 225px;
}
.n2 {
    top: 1283px;
    width: 206px;
    height: 225px;
    background: #e2f7ae;
    border-color: #a3bf6c;
}
.n2 .note-head {
    background: #c9e096;
    border-color: #b0c97c;
}
.n3 {
    top: 1315px;
    left: 2413px;
    width: 147px;
    height: 144px;
}
.n3 .note-head {
    padding-right: 6px;
}
.n3 .note-head span {
    width: 54px;
    letter-spacing: 0.6px;
}
```
